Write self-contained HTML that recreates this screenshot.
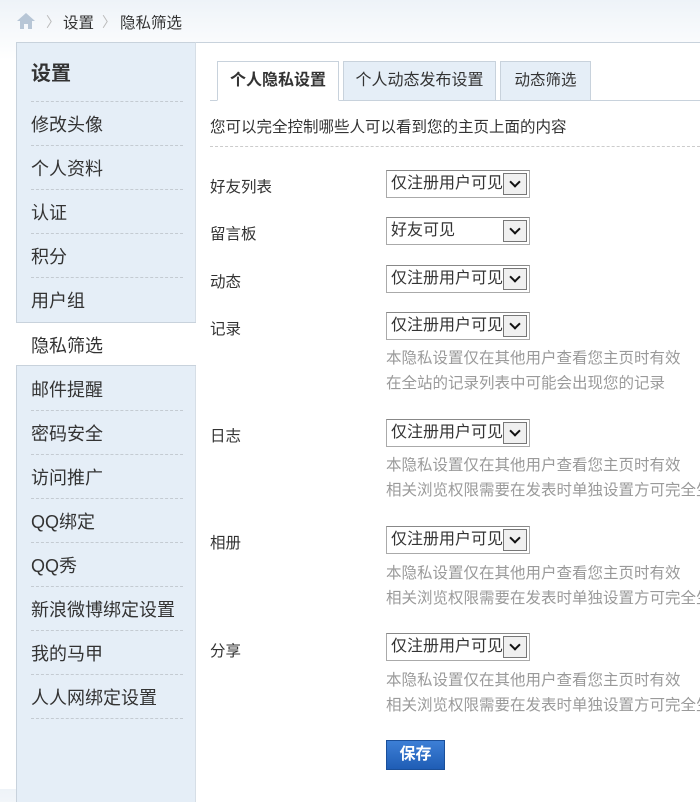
<!DOCTYPE html>
<html><head><meta charset="utf-8"><style>
*{margin:0;padding:0;box-sizing:border-box}
body{width:700px;height:789px;overflow:hidden;background:linear-gradient(#eef3f8,#fff 60px);font-family:"Liberation Sans","Noto Sans CJK SC",sans-serif;color:#333;position:relative}
.a{position:absolute;white-space:nowrap}
.side{position:absolute;left:16px;top:42px;width:180px;height:760px;background:#e5eef7;border-left:1px solid #c8d2dc;border-top:1px solid #c8d2dc;border-right:1px solid #d6dee6}
.main{position:absolute;left:196px;top:42px;width:510px;height:760px;background:#fff;border-top:1px solid #c8d2dc}
.it{position:absolute;left:14px;width:152px;font-size:18px;height:44px;line-height:46px;border-bottom:1px dashed #c4cbd2}
.sel{position:absolute;left:386px;width:144px;height:28px;border:1px solid #aaa;border-top-color:#888;background:#fff;font-size:16px;line-height:26px;padding-left:4px;color:#333;overflow:hidden}
.sel i{position:absolute;right:2px;top:2px;width:24px;height:22px;border:1px solid #777;background:#f0f0f0}
.sel i:after{content:"";position:absolute;left:7px;top:4px;width:6px;height:6px;border-right:2px solid #111;border-bottom:2px solid #111;transform:rotate(45deg)}
.lb{position:absolute;left:210px;font-size:15.5px}
.nt{position:absolute;left:386px;font-size:15.5px;color:#9a9a9a;line-height:25px;white-space:nowrap}
.tab{position:absolute;top:61px;height:40px;border:1px solid #c8d2dc;background:#e5eef7;font-size:15.5px;line-height:38px;text-align:center}
</style></head><body>
<svg class="a" style="left:16px;top:12px" width="20" height="18" viewBox="0 0 20 18"><path d="M10 1 L1 9 H4 V17 H8 V12 H12 V17 H16 V9 H19 Z" fill="#b7c6d6"/></svg>
<div class="a" style="left:46px;top:12px;font-size:14px;color:#bbb">〉</div>
<div class="a" style="left:63px;top:11px;font-size:15.5px">设置</div>
<div class="a" style="left:102px;top:12px;font-size:14px;color:#bbb">〉</div>
<div class="a" style="left:120px;top:11px;font-size:15.5px">隐私筛选</div>
<div class="side">
<div class="it" style="top:12px;font-weight:bold;font-size:20px;height:47px;line-height:38px">设置</div>
<div class="it" style="top:59px">修改头像</div>
<div class="it" style="top:103px">个人资料</div>
<div class="it" style="top:147px">认证</div>
<div class="it" style="top:191px">积分</div>
<div class="it" style="top:235px;border:none">用户组</div>
<div class="a" style="left:-1px;top:279px;width:180px;height:44px;background:#fff;border-top:1px solid #c8d2dc;border-bottom:1px solid #c8d2dc"></div>
<div class="it" style="top:280px;border:none">隐私筛选</div>
<div class="it" style="top:324px">邮件提醒</div>
<div class="it" style="top:368px">密码安全</div>
<div class="it" style="top:412px">访问推广</div>
<div class="it" style="top:456px">QQ绑定</div>
<div class="it" style="top:500px">QQ秀</div>
<div class="it" style="top:544px">新浪微博绑定设置</div>
<div class="it" style="top:588px">我的马甲</div>
<div class="it" style="top:632px">人人网绑定设置</div>
</div>
<div class="main"></div>
<div class="a" style="left:210px;top:100px;width:490px;height:1px;background:#c8d2dc"></div>
<div class="tab" style="left:217px;width:122px;background:#fff;border-bottom-color:#fff;font-weight:bold;font-size:16px">个人隐私设置</div>
<div class="tab" style="left:343px;width:153px;font-size:16px">个人动态发布设置</div>
<div class="tab" style="left:500px;width:91px">动态筛选</div>
<div class="a" style="left:210px;top:115px;font-size:15.5px">您可以完全控制哪些人可以看到您的主页上面的内容</div>
<div class="a" style="left:210px;top:146px;width:490px;border-top:1px dashed #ccc"></div>
<div class="lb" style="top:175px">好友列表</div><div class="sel" style="top:170px">仅注册用户可见<i></i></div>
<div class="lb" style="top:222px">留言板</div><div class="sel" style="top:217px">好友可见<i></i></div>
<div class="lb" style="top:270px">动态</div><div class="sel" style="top:265px">仅注册用户可见<i></i></div>
<div class="lb" style="top:317px">记录</div><div class="sel" style="top:312px">仅注册用户可见<i></i></div>
<div class="nt" style="top:346px">本隐私设置仅在其他用户查看您主页时有效<br>在全站的记录列表中可能会出现您的记录</div>
<div class="lb" style="top:424px">日志</div><div class="sel" style="top:419px">仅注册用户可见<i></i></div>
<div class="nt" style="top:453px">本隐私设置仅在其他用户查看您主页时有效<br>相关浏览权限需要在发表时单独设置方可完全生效</div>
<div class="lb" style="top:531px">相册</div><div class="sel" style="top:526px">仅注册用户可见<i></i></div>
<div class="nt" style="top:561px">本隐私设置仅在其他用户查看您主页时有效<br>相关浏览权限需要在发表时单独设置方可完全生效</div>
<div class="lb" style="top:639px">分享</div><div class="sel" style="top:633px">仅注册用户可见<i></i></div>
<div class="nt" style="top:668px">本隐私设置仅在其他用户查看您主页时有效<br>相关浏览权限需要在发表时单独设置方可完全生效</div>
<div class="a" style="left:386px;top:740px;width:59px;height:30px;background:linear-gradient(#3d7fd6,#1f5db5);border:1px solid #1a4f9a;color:#fff;font-weight:bold;font-size:16px;text-align:center;line-height:28px">保存</div>
</body></html>
